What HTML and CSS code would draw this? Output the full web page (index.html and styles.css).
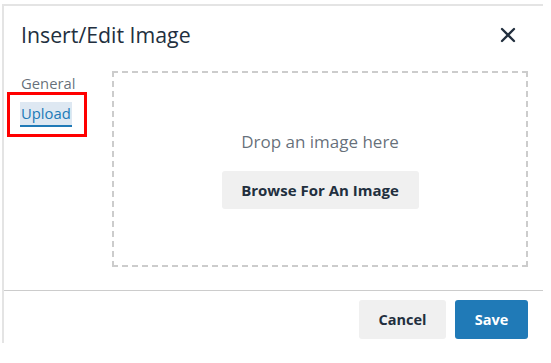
FILE: index.html
```html
<!DOCTYPE html>
<html>
<head>
<meta charset="utf-8">
<link rel="stylesheet" href="styles.css">
</head>
<body>
<div class="dialog">
  <div class="header">
    <div class="title">Insert/Edit Image</div>
    <button class="close" aria-label="Close">
      <svg width="16" height="16" viewBox="0 0 16 16"><path d="M2 2 L14 14 M14 2 L2 14" stroke="#222f3e" stroke-width="2.3" stroke-linecap="round" fill="none"/></svg>
    </button>
  </div>
  <div class="body">
    <div class="nav">
      <div class="nav-item">General</div>
      <div class="nav-item active"><span>Upload</span></div>
    </div>
    <div class="dropzone">
      <p class="drop-text">Drop an image here</p>
      <button class="btn secondary browse">Browse For An Image</button>
    </div>
  </div>
  <div class="footer">
    <button class="btn secondary">Cancel</button>
    <button class="btn primary">Save</button>
  </div>
  <div class="annot"></div>
</div>
</body>
</html>
```
FILE: styles.css
```css
* { box-sizing: border-box; }
html, body { margin: 0; padding: 0; background: #fff; }
body { font-family: "Open Sans", "Noto Sans", sans-serif; color: #222f3e; }

.dialog {
  position: relative;
  margin: 4px 0 0 2px;
  width: 541px;
  height: 339px;
  border-top: 2px solid #e4e4e4;
  border-left: 2px solid #e4e4e4;
  display: flex;
  flex-direction: column;
}

.header {
  height: 58px;
  display: flex;
  align-items: center;
  justify-content: space-between;
  padding: 0 27px 0 17px;
}
.title { font-size: 21.3px; line-height: 1; }
.close {
  border: 0; background: none; padding: 0; margin: 0;
  width: 16px; height: 16px; display: flex;
}

.body {
  flex: 1;
  display: flex;
  padding: 7px 15px 23px 17px;
}
.nav {
  width: 91px;
  display: flex;
  flex-direction: column;
  padding-top: 2px;
}
.nav-item {
  font-size: 14.8px;
  line-height: 20px;
  color: rgba(34,47,62,0.7);
  margin-bottom: 10px;
}
.nav-item.active span {
  color: #207ab7;
  background: #dee8f2;
  border-bottom: 2px solid #207ab7;
  padding: 1px 1px 2px;
  margin-left: -1px;
}

.dropzone {
  flex: 1;
  border: 2px dashed #cccccc;
  display: flex;
  flex-direction: column;
  align-items: center;
  padding-top: 58px;
}
.drop-text {
  margin: 0;
  font-size: 17px;
  line-height: 22px;
  color: rgba(34,47,62,0.7);
}
.btn {
  border: 0;
  border-radius: 3px;
  font-family: inherit;
  font-weight: 700;
  font-size: 14.5px;
  height: 39px;
  padding: 0 19px;
  cursor: pointer;
}
.secondary { background: #f0f0f0; color: #222f3e; }
.primary { background: #207ab7; color: #fff; }
.browse { margin-top: 18px; height: 38px; width: 197px; padding: 0; font-size: 15px; }

.footer {
  border-top: 1px solid #cccccc;
  display: flex;
  justify-content: flex-end;
  gap: 9px;
  padding: 9px 15px 0 0;
  height: 53px;
}
.footer .btn:first-child { width: 87px; padding: 0; }
.footer .btn:last-child { width: 73px; padding: 0; }

.annot {
  position: absolute;
  left: 3px;
  top: 86px;
  width: 80px;
  height: 45px;
  border: 3px solid #ff0000;
}
```
